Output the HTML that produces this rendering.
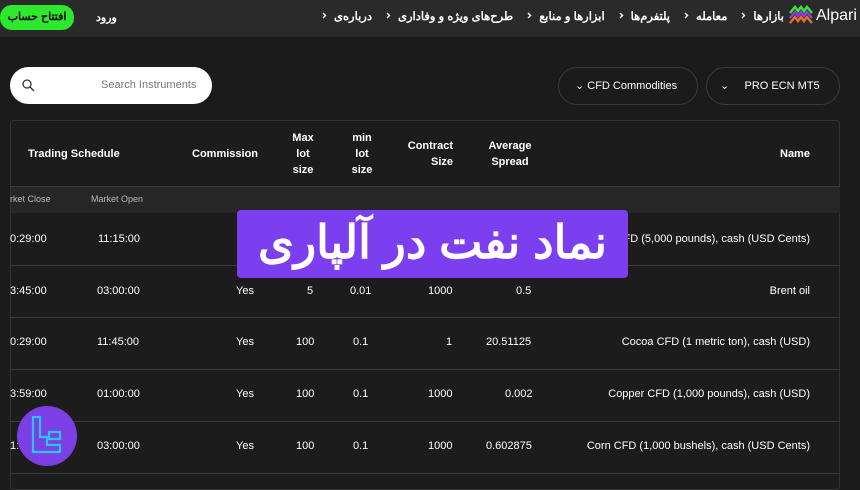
<!DOCTYPE html>
<html><head><meta charset="utf-8"><style>
*{margin:0;padding:0;box-sizing:border-box}
body{width:860px;height:484px;overflow:hidden;background:#1b1b1b;font-family:"Liberation Sans","Noto Sans CJK SC",sans-serif;color:#fff;position:relative}
.nav{position:absolute;left:0;top:0;width:860px;height:37px;background:#2a2a2a}
.a{position:absolute;white-space:nowrap}
.t{font-size:11px;color:#fff}
.r{text-align:right}
.h{font-size:11px;font-weight:bold;text-align:center;line-height:16px}
.line{position:absolute;left:10px;width:830px;height:1px;background:#3a3a3a}
.menu{position:absolute;left:322px;top:9px;width:462px;display:flex;flex-direction:row-reverse;justify-content:space-between;font-size:11.5px;font-weight:bold}
.menu span{display:flex;align-items:flex-start;gap:7px}
.menu svg{display:block;margin-top:3px}
</style></head><body>
<div class="nav"></div>
<div class="a" style="left:0;top:5px;width:74px;height:25px;background:#2ee82e;border-radius:12px;color:#000;font-size:11px;font-weight:bold;text-align:center;line-height:25px">افتتاح حساب</div>
<div class="a t" style="left:96px;top:11px;font-weight:bold">ورود</div>
<div class="menu">
<span><svg width="5" height="7" viewBox="0 0 5 7"><path d="M1 1l2.5 2.5L1 6" stroke="#fff" stroke-width="1.4" fill="none"/></svg><i style="font-style:normal">بازارها</i></span>
<span><svg width="5" height="7" viewBox="0 0 5 7"><path d="M1 1l2.5 2.5L1 6" stroke="#fff" stroke-width="1.4" fill="none"/></svg><i style="font-style:normal">معامله</i></span>
<span><svg width="5" height="7" viewBox="0 0 5 7"><path d="M1 1l2.5 2.5L1 6" stroke="#fff" stroke-width="1.4" fill="none"/></svg><i style="font-style:normal">پلتفرم‌ها</i></span>
<span><svg width="5" height="7" viewBox="0 0 5 7"><path d="M1 1l2.5 2.5L1 6" stroke="#fff" stroke-width="1.4" fill="none"/></svg><i style="font-style:normal">ابزارها و منابع</i></span>
<span><svg width="5" height="7" viewBox="0 0 5 7"><path d="M1 1l2.5 2.5L1 6" stroke="#fff" stroke-width="1.4" fill="none"/></svg><i style="font-style:normal">طرح‌های ویژه و وفاداری</i></span>
<span><svg width="5" height="7" viewBox="0 0 5 7"><path d="M1 1l2.5 2.5L1 6" stroke="#fff" stroke-width="1.4" fill="none"/></svg><i style="font-style:normal">درباره‌ی</i></span>
</div>
<svg class="a" style="left:789px;top:5px" width="24" height="20" viewBox="0 0 24 20"><polyline points="1,8 6,2 9,6 12,2 15,6 18,2 23,8" stroke="#3de03d" stroke-width="2.5" fill="none"/><polyline points="1,13 6,7 9,11 12,7 15,11 18,7 23,13" stroke="#8a3fe0" stroke-width="2.5" fill="none"/><polyline points="1,18 6,12 9,16 12,12 15,16 18,12 23,18" stroke="#e0702a" stroke-width="2.5" fill="none"/></svg>
<div class="a" style="left:816px;top:7px;font-size:16px">Alpari</div>

<div class="a" style="left:10px;top:67px;width:202px;height:37px;background:#fff;border-radius:19px"></div>
<svg class="a" style="left:22px;top:79px" width="13" height="13" viewBox="0 0 13 13"><circle cx="5" cy="5" r="4" stroke="#333" stroke-width="1.3" fill="none"/><line x1="8" y1="8" x2="12" y2="12" stroke="#333" stroke-width="1.3"/></svg>
<div class="a" style="left:101px;top:79px;font-size:11px;color:#777">Search Instruments</div>
<div class="a" style="left:558px;top:67px;width:140px;height:38px;border:1px solid #3a3a3a;border-radius:19px"></div>
<div class="a t" style="left:575px;top:79px">⌄ CFD Commodities</div>
<div class="a" style="left:706px;top:67px;width:134px;height:38px;border:1px solid #3a3a3a;border-radius:19px"></div>
<div class="a t" style="left:720px;top:79px">⌄ &nbsp;&nbsp;&nbsp; PRO ECN MT5</div>

<div class="a" style="left:10px;top:120px;width:830px;height:370px;border:1px solid #333;border-radius:4px;background:#1c1c1c"></div>
<div class="a" style="left:11px;top:186px;width:829px;height:27px;background:#262626"></div>
<div class="line" style="top:186px"></div>
<div class="line" style="top:265px"></div><div class="line" style="top:317px"></div><div class="line" style="top:369px"></div><div class="line" style="top:421px"></div><div class="line" style="top:473px"></div>

<div class="a h" style="left:28px;top:146px">Trading Schedule</div>
<div class="a h" style="left:192px;top:146px">Commission</div>
<div class="a h" style="left:288px;top:130px;width:30px">Max<br>lot<br>size</div>
<div class="a h" style="left:347px;top:130px;width:30px">min<br>lot<br>size</div>
<div class="a h" style="left:393px;top:138px;width:60px;text-align:right">Contract<br>Size</div>
<div class="a h" style="left:485px;top:138px;width:50px">Average<br>Spread</div>
<div class="a h" style="left:780px;top:146px">Name</div>
<div class="a" style="left:10px;top:194px;font-size:9px;color:#bbb">rket Close</div>
<div class="a" style="left:91px;top:194px;font-size:9px;color:#bbb">Market Open</div>

<div class="a t" style="left:10px;top:233px">0:29:00</div><div class="a t" style="left:98px;top:233px">11:15:00</div>
<div class="a t r" style="right:50px;top:233px">CFD (5,000 pounds), cash (USD Cents)</div>

<div class="a t" style="left:10px;top:285px">3:45:00</div><div class="a t" style="left:97px;top:285px">03:00:00</div>
<div class="a t" style="left:236px;top:285px">Yes</div><div class="a t" style="left:307px;top:285px">5</div><div class="a t" style="left:350px;top:285px">0.01</div><div class="a t" style="left:428px;top:285px">1000</div><div class="a t" style="left:516px;top:285px">0.5</div><div class="a t r" style="right:50px;top:285px">Brent oil</div>

<div class="a t" style="left:10px;top:336px">0:29:00</div><div class="a t" style="left:97px;top:336px">11:45:00</div>
<div class="a t" style="left:236px;top:336px">Yes</div><div class="a t" style="left:296px;top:336px">100</div><div class="a t" style="left:353px;top:336px">0.1</div><div class="a t" style="left:446px;top:336px">1</div><div class="a t" style="left:486px;top:336px">20.51125</div><div class="a t r" style="right:50px;top:336px">Cocoa CFD (1 metric ton), cash (USD)</div>

<div class="a t" style="left:10px;top:388px">3:59:00</div><div class="a t" style="left:97px;top:388px">01:00:00</div>
<div class="a t" style="left:236px;top:388px">Yes</div><div class="a t" style="left:296px;top:388px">100</div><div class="a t" style="left:353px;top:388px">0.1</div><div class="a t" style="left:428px;top:388px">1000</div><div class="a t" style="left:505px;top:388px">0.002</div><div class="a t r" style="right:50px;top:388px">Copper CFD (1,000 pounds), cash (USD)</div>

<div class="a t" style="left:10px;top:440px">1:</div><div class="a t" style="left:97px;top:440px">03:00:00</div>
<div class="a t" style="left:236px;top:440px">Yes</div><div class="a t" style="left:296px;top:440px">100</div><div class="a t" style="left:353px;top:440px">0.1</div><div class="a t" style="left:428px;top:440px">1000</div><div class="a t" style="left:486px;top:440px">0.602875</div><div class="a t r" style="right:50px;top:440px">Corn CFD (1,000 bushels), cash (USD Cents)</div>

<div class="a" style="left:237px;top:210px;width:391px;height:68px;background:#7c3ff0;border-radius:4px;text-align:center;font-family:'Liberation Sans','Noto Sans CJK SC',sans-serif;font-size:46px;font-weight:bold;line-height:64px">نماد نفت در آلپاری</div>

<div class="a" style="left:17px;top:406px;width:60px;height:60px;border-radius:50%;background:#7b3fe4"></div>
<svg class="a" style="left:30px;top:414px" width="36" height="44" viewBox="0 0 36 44"><path d="M3 3h7v20h9v-5h11v7h-13v6h13v7H3z" fill="none" stroke="#29c5f6" stroke-width="2.2" stroke-linejoin="miter"/></svg>
</body></html>
